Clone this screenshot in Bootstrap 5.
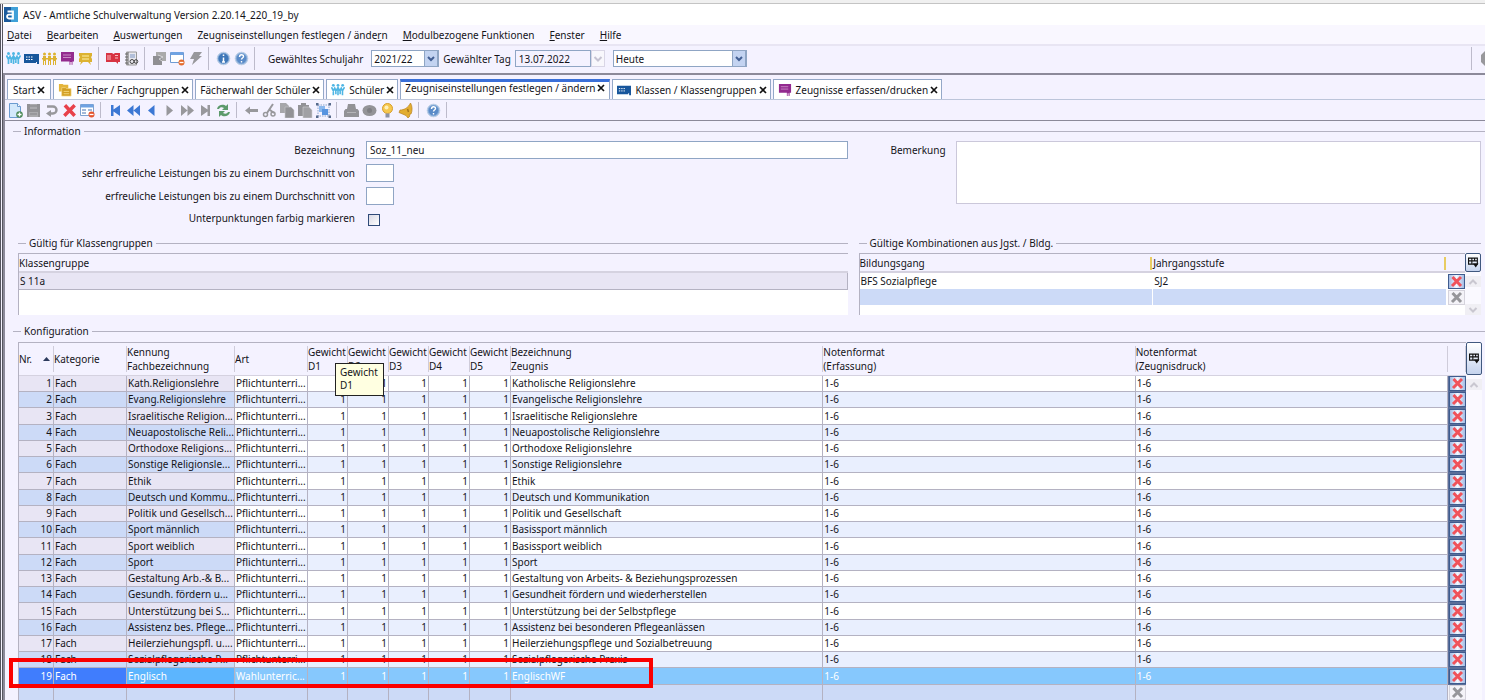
<!doctype html>
<html lang="de">
<head>
<meta charset="utf-8">
<meta name="viewport" content="width=device-width, initial-scale=1">
<title>ASV - Amtliche Schulverwaltung</title>
<link href="https://cdn.jsdelivr.net/npm/bootstrap@5.3.0/dist/css/bootstrap.min.css" rel="stylesheet">
<script src="https://cdn.jsdelivr.net/npm/bootstrap@5.3.0/dist/js/bootstrap.bundle.min.js" defer></script>
<style>
  :root { --face:#f4f2ff; --line:#b4b2c2; --frame:#8c8a9a; --field:#8fa5c4; }
  body { font:10px/14px "Noto Sans","Open Sans",sans-serif; color:#14141a; background:var(--face); height:100vh; overflow:hidden; }
  button, input, select, textarea { font:inherit; color:inherit; border-radius:0; }

  /* window frame, title, menu */
  .top-strip { height:4px; background:#f0f0f0; border-bottom:1px solid #c4c4c4; }
  .app-window { border-left:3px double #55555f; }
  .title-bar { height:21px; background:#fff; padding-left:1px; gap:5px; }
  .menu-bar { height:21px; background:#f9f7ff; border-bottom:2px solid #e8e5f3; padding-left:4px; gap:15px; }
  .menu-bar a { color:inherit; text-decoration:none; }

  /* tool bars */
  .tool-bar { height:27px; padding:0 0 2px 1px; }
  .tool-bar.inner { height:20px; padding-bottom:0; }
  .tool-btn { width:18px; height:18px; padding:0; border:0; background:none; display:flex; align-items:center; justify-content:center; }
  .tool-bar svg { width:15px; height:15px; display:block; }
  .c-sky { color:#4fb6e4; }
  .c-blue { color:#3c78d4; }
  .c-grey { color:#98989c; }
  .c-red { color:#e8404a; }
  .sep { width:10px; height:23px; background:linear-gradient(#bdbbcb,#bdbbcb) 4px 0/1px 100% no-repeat; }
  .inner .sep { height:16px; }
  .combo { height:17px; padding:0 16px 0 2px; line-height:14px; border:1px solid var(--field); appearance:none; color:#14141a;
    background:#fff url("data:image/svg+xml,%3Csvg xmlns='http://www.w3.org/2000/svg' width='14' height='17'%3E%3Crect width='14' height='17' fill='%23c3d3f1'/%3E%3Crect x='.5' y='.5' width='13' height='16' fill='none' stroke='%238fa5c4'/%3E%3Cpath d='M4 7l3 3 3-3' fill='none' stroke='%23435f94' stroke-width='2'/%3E%3C/svg%3E") right center no-repeat; }
  .combo-off { width:14px; height:17px; border:1px solid #d9d6e6; padding:0; background:#f8f7fc; color:#c6c3d2; display:flex; align-items:center; justify-content:center; }
  .tool-bar .combo-off svg { width:10px; height:10px; }
  .w-year { width:68px; }
  .w-range { width:134px; }
  .tool-bar .w-day { width:76px; background:var(--face); height:17px; }
  .bar-end { width:18px; }

  /* document tabs */
  .work-area { border-top:2px solid var(--frame); border-left:2px solid var(--frame); }
  .doc-tabs { padding:4px 0 0 2px; gap:2px; border-bottom:1px solid #bcc5da; height:25px; flex-wrap:nowrap; }
  .doc-tab { display:flex; align-items:center; height:20px; gap:2px; padding:0 3px 0 4px; background:#fff; border:1px solid #94a8c8; border-bottom:0; white-space:nowrap; }
  .doc-tab:first-child { padding:0 5px; }
  .doc-tab a { color:inherit; text-decoration:none; display:flex; align-items:center; gap:4px; }
  .doc-tab svg.pic { width:14px; height:14px; }
  .doc-tab.current { border-top:3px solid #3a6fd8; padding:0 4px; }
  .doc-tab.current, .doc-tab.current a { align-items:flex-start; line-height:13px; }
  .doc-tab.current button { margin-top:2px; }
  .doc-tab button { border:0; padding:0; background:none; width:8px; height:8px; display:flex; }
  .doc-tab button svg { width:8px; height:8px; }

  /* titled groups and form */
  .content-area { border-top:1px solid var(--frame); }
  fieldset > legend { font-size:10px; line-height:14px; display:flex; align-items:center; gap:3px; margin:0; float:none; }
  fieldset > legend::before { content:""; width:8px; height:1px; background:var(--line); }
  fieldset > legend::after { content:""; flex:1; height:1px; background:var(--line); }
  .split { display:grid; grid-template-columns:56.7% 1fr; }
  .info-set { margin-top:3px; padding-left:8px; }
  .info-grid { display:grid; grid-template-columns:342px 1fr; column-gap:11px; row-gap:5px; align-items:center; padding-top:3px; }
  .info-grid label { text-align:right; }
  .text-field { border:1px solid var(--field); height:18px; padding:0 3px; background:#fff; width:100%; }
  .text-field.short { width:28px; }
  .tick { appearance:none; width:12px; height:12px; border:1px solid #2f4a78; margin:4px 0 0 2px; background:linear-gradient(135deg,#d9d9e4,#fff); display:block; }
  .note-row { padding:3px 4px 0 0; gap:10px; }
  .note-row label { width:98px; text-align:right; padding-top:2px; }
  .notes { border:1px solid #cbc8da; background:#fff; height:63px; resize:none; display:block; }

  /* data grids */
  .groups { padding:10px 4px 0 13px; column-gap:11px; }
  .grid-row { margin-top:3px; }
  .grid-box { border-top:1px solid var(--line); border-left:1px solid var(--line); background:#fff; }
  .grid-box table { width:100%; table-layout:fixed; border-collapse:separate; border-spacing:0; }
  .grid-box th { font-weight:400; padding:0; background:var(--face); border-bottom:1px solid #d5d2e0; line-height:14px; vertical-align:middle; white-space:nowrap; }
  .grid-box td { padding:0 1px; line-height:15px; white-space:nowrap; overflow:hidden; }
  .small-grid { height:62px; overflow:hidden; }
  .small-grid th { height:19px; border-bottom-width:2px; }
  .small-grid td { height:16px; }
  .small-grid .picked td { height:17px; background:#e8e5f4; border-bottom:1px solid var(--line); border-right:1px solid var(--line); }
  .small-grid .new-row td { background:#ccdaf7; border-right:1px solid #fff; }
  .small-grid tr > td.act { background:#fff; border:0; padding:0; }
  .small-grid th.mark-right { background:linear-gradient(#e8cc62,#e8cc62) right 1px top 3px/2px 13px no-repeat, var(--face); }
  .col-act { width:18px; }
  .scroll-col { width:18px; background:#faf9ff; }
  .col-pick { width:16px; border:1px solid #40587f; border-radius:2px; padding:0; background:linear-gradient(#fff,#c5d3ee); display:flex; align-items:center; justify-content:center; color:#111; }
  .col-pick svg { width:11px; height:11px; }
  .pick-small { height:19px; }
  .pick-tall { height:33px; }
  .arrow-btn { width:16px; height:11px; border:0; padding:0; background:#f0eff4; color:#c9c7d0; display:flex; align-items:center; justify-content:center; }
  .arrow-btn svg { width:10px; height:10px; }
  .del { width:17px; height:15px; padding:0; border:1px solid #3f5c8f; background:linear-gradient(90deg,#a4bce4,#f4f7ff 50%,#a4bce4); color:#f0525a; display:flex; align-items:center; justify-content:center; margin:0 auto; }
  .del svg { width:13px; height:13px; }
  .del.off { background:#f4f3f8; border-color:#d5d3dc; color:#96969a; }

  .config-set { margin-top:9px; padding-left:8px; }
  .config-body { padding:13px 3px 0 5px; margin-top:-9px; }
  .config-set .config-body { margin-top:0; padding-top:4px; }
  .big-grid th { height:33px; background:linear-gradient(#cfccda,#cfccda) right 0 top 3px/1px 26px no-repeat, var(--face); }
  .big-grid td { height:16px; border-right:1px solid var(--line); border-bottom:1px solid var(--line); background:#fff; }
  .big-grid tr:nth-child(4n+3) td { height:17px; }
  .big-grid tr:nth-child(even) td { background:#e9effe; }
  .big-grid td:nth-child(-n+3) { background:#e8e5f4; }
  .big-grid tr:nth-child(even) td:nth-child(-n+3), .big-grid tr.new-row td { background:#ccdaf7; }
  .big-grid tr td.act { padding:0; background:#5b6f9a; border-color:#5b6f9a; border-width:0 0 1px 0; }
  .big-grid tr:nth-child(even) td.act { background:#5b6f9a; }
  .big-grid tr.new-row td.act { background:#f4f3f8; border-color:#d5d3dc; }
  .big-grid tr.chosen td { background:#86c8fd; color:#fff; }
  .big-grid tr.chosen td:nth-child(-n+2) { background:#407dfd; }
  .big-grid tr.chosen td:nth-child(3) { background:#5cb5fe; }
  .big-grid tr.chosen td.act { background:#5b6f9a; }
  .big-grid .num { text-align:right; }
  .c-nr { width:35px; } .c-kat { width:73px; } .c-fach { width:108px; } .c-w { width:40px; } .c-w2 { width:41px; }

  /* overlays on the configuration grid */
  .red-frame { position:absolute; left:-4px; right:832px; top:320px; height:30px; border:4px solid #fb0000; pointer-events:none; }
  .tip { position:absolute; left:322px; top:25px; width:49px; padding:2px 4px 3px; line-height:13px; background:#ffffe1; border:1px solid #222; }
</style>
</head>
<body>
<svg class="d-none" xmlns="http://www.w3.org/2000/svg">
  <symbol id="people" viewBox="0 0 15 15"><g fill="currentColor"><circle cx="2.500" cy="2.500" r="1.500"/><circle cx="7.500" cy="2.500" r="1.500"/><circle cx="12.500" cy="2.500" r="1.500"/></g><path d="M.5 4.500l2 4 1.500-3 1.300 3L7.500 5l2 3.500 1.500-3 1.200 3 2.300-4M2.500 8v5M5.200 8v4M7.500 6v7M9.800 8v4M12.300 8v5" fill="none" stroke="currentColor" stroke-width="1.700"/></symbol>
  <symbol id="board" viewBox="0 0 15 15"><path d="M0 3h15v10h-2v-2h-1v1H0z" fill="#17569c"/><path d="M2 6h7M2 8.500h7" stroke="#fff" stroke-dasharray="1.500 1"/></symbol>
  <symbol id="group" viewBox="0 0 15 15"><g fill="#dcb231"><circle cx="2.500" cy="3" r="1.500"/><circle cx="7.500" cy="3" r="1.500"/><circle cx="12.500" cy="3" r="1.500"/><path d="M1 5h3v9H3v-4H2v4H1zM6 5h3v9H8v-4H7v4H6zM11 5h3v9h-1v-4h-1v4h-1z"/><path d="M0 7h15v1.500H0z"/></g></symbol>
  <symbol id="certificate" viewBox="0 0 15 15"><path d="M1 1h13v9.500h-1.500V14l-1.500-1-1.500 1v-3.500H1z" fill="#932a8f"/><path d="M3 4h8M3 6.500h8" stroke="#c98cc6"/><path d="M10 11h2v2h-2z" fill="#d5a3d3"/></symbol>
  <symbol id="ticket" viewBox="0 0 15 15"><path d="M1 2h13v3l-1 1 1 2v3h-2l1 3-3-3H5l-3 3 1-3H1V8l1-2-1-1z" fill="#dcb231"/><path d="M4 5h7M4 8h7" stroke="#fff0a8"/></symbol>
  <symbol id="redbook" viewBox="0 0 15 15"><path d="M0 2h6l1.500 1L9 2h5v9h-2v2l-2-2H0z" fill="#d73343"/><path d="M2 4v5M4 4v5M9 4.500h3M9 7h3" stroke="#f9bbc0"/></symbol>
  <symbol id="notebook" viewBox="0 0 15 15"><path d="M2.500 1h10v13h-10z" fill="#e8e8ee" stroke="#999"/><path d="M4 1v13M1 3h3M1 6h3M1 9h3M1 12h3" stroke="#666"/><path d="M6 4h5M6 6h5" stroke="#7d96c4"/><circle cx="8" cy="10.500" r="2" fill="none" stroke="#444"/><circle cx="12" cy="10.500" r="1.800" fill="none" stroke="#444"/></symbol>
  <symbol id="copygrey" viewBox="0 0 15 15"><path d="M4 1h10v9H4z" fill="#aaa"/><path d="M1 5h9v9H1z" fill="#8f8f93"/><path d="M6 4l5 2-4 2 3 2" stroke="#d5d5d8" fill="none"/></symbol>
  <symbol id="window" viewBox="0 0 15 15"><path d="M.5 1.500h13v10H.5z" fill="#fff" stroke="#6f9bd3"/><path d="M1 1h12v3H1z" fill="#6fa2e2"/><circle cx="11.500" cy="11.500" r="3" fill="#e46a2c"/><path d="M9.500 11.500h4" stroke="#fff" stroke-width="1.300"/></symbol>
  <symbol id="form" viewBox="0 0 15 15"><path d="M.5 1.500h13v11H.5z" fill="#fff" stroke="#7ea2d1"/><path d="M1 1.500h12v3H1z" fill="#6fa2e2"/><path d="M2 7h4M8 7h4M2 10h4" stroke="#84a1cc" stroke-width="1.500"/><circle cx="11.500" cy="11.500" r="3" fill="#e4532c"/><path d="M9.500 11.500h4" stroke="#fff" stroke-width="1.300"/></symbol>
  <symbol id="bolt" viewBox="0 0 15 15"><path d="M6 1h8l-3 4h3L4 14l2-6H2z" fill="#98989c"/></symbol>
  <symbol id="info" viewBox="0 0 15 15"><circle cx="7.500" cy="7.500" r="6.300" fill="#86abd9" stroke="#bccfe6"/><circle cx="7.500" cy="7.500" r="5" fill="#3f77b8"/><path d="M7.500 3.500v1.500M7.500 6.500V11M6 11h3" stroke="#fff" stroke-width="1.500"/></symbol>
  <symbol id="help" viewBox="0 0 15 15"><circle cx="7.500" cy="7.500" r="6.300" fill="#86abd9" stroke="#bccfe6"/><circle cx="7.500" cy="7.500" r="4.800" fill="#5a8bc8"/><path d="M5.500 6c0-3 4-3 4-.5 0 1.500-2 1.500-2 3M7.500 10v1.500" fill="none" stroke="#fff" stroke-width="1.400"/></symbol>
  <symbol id="folders" viewBox="0 0 15 15"><path d="M1 1h4l1 1h5v7H1z" fill="#e4b53a"/><path d="M4 5h4l1 1h5v8H4z" fill="#d29e22" stroke="#f6dc8c" stroke-width=".7"/><path d="M6 9h6M6 11.500h6" stroke="#f3d67d"/></symbol>
  <symbol id="cross" viewBox="0 0 13 13"><path d="M2.500 2l8.500 9M11 2l-9 9" stroke="currentColor" stroke-width="3" fill="none"/></symbol>
  <symbol id="close" viewBox="0 0 8 8"><path d="M1 1l6 6M7 1L1 7" stroke="#111" stroke-width="1.700"/></symbol>
  <symbol id="newdoc" viewBox="0 0 15 15"><path d="M1.500.5h8l3 3v11h-11z" fill="#d3e8fb" stroke="#6b9bd0"/><path d="M9.500.5v3h3" fill="#fff" stroke="#6b9bd0"/><circle cx="11.500" cy="11.500" r="3.300" fill="#4c8a58"/><path d="M11.500 9.500v4M9.500 11.500h4" stroke="#fff" stroke-width="1.300"/></symbol>
  <symbol id="disk" viewBox="0 0 15 15"><path d="M1 1h13v13H1z" fill="#929296"/><path d="M4 1h7v5H4zM3 9h9v5H3z" fill="#aaaaae"/><path d="M4 3h7M4 11h7" stroke="#858589"/></symbol>
  <symbol id="undo" viewBox="0 0 15 15"><path d="M3 3.500h6a3.500 3.500 0 010 7H6" fill="none" stroke="#98989c" stroke-width="2.400"/><path d="M7 7v7l-5-3.500z" fill="#98989c"/></symbol>
  <symbol id="first" viewBox="0 0 15 15"><path d="M3 2h2.500v4.500L12 2v11L5.500 8.500V13H3z" fill="currentColor"/></symbol>
  <symbol id="fast" viewBox="0 0 15 15"><path d="M7.500 2v11L1 7.500zM14 2v11L7.500 7.500z" fill="currentColor"/></symbol>
  <symbol id="step" viewBox="0 0 15 15"><path d="M10.500 2v11L4 7.500z" fill="currentColor"/></symbol>
  <symbol id="refresh" viewBox="0 0 15 15"><path d="M1 6c1-5 7-5 9-3l2-2v6H6l2-2C6 4 4 4 3 6zM14 9c-1 5-7 5-9 3l-2 2V8h6l-2 2c2 1 4 1 5-1z" fill="#5c9a6c"/></symbol>
  <symbol id="back" viewBox="0 0 15 15"><path d="M1 7.500L6 3.500V6h8v3H6v2.500z" fill="#98989c"/></symbol>
  <symbol id="scissors" viewBox="0 0 15 15"><path d="M11 1L5 10M8 7l4 3" stroke="#98989c" stroke-width="2"/><circle cx="3.500" cy="11.500" r="2" fill="none" stroke="#98989c" stroke-width="1.500"/><circle cx="11" cy="11" r="2" fill="none" stroke="#98989c" stroke-width="1.500"/></symbol>
  <symbol id="copy" viewBox="0 0 15 15"><path d="M0 0h6l3 3v7H0z" fill="#a6a6aa"/><path d="M5 4h6l3 3v8H5z" fill="#929296" stroke="#c9c9cf" stroke-width=".6"/></symbol>
  <symbol id="paste" viewBox="0 0 15 15"><path d="M0 2h3V0h5v2h3v11H0z" fill="#929296"/><path d="M5 4h6l3 3v8H5z" fill="#a0a0a4" stroke="#d0d0d5" stroke-width=".6"/></symbol>
  <symbol id="select" viewBox="0 0 15 15"><path d="M2 2h11v11H2z" fill="none" stroke="#8ba4cc" stroke-dasharray="1.500 1"/><path d="M3 3h6v6H3z" fill="#8ab8ee"/><path d="M6 6h6v6H6z" fill="#5794e0"/><path d="M0 0h2.500v2.500H0zM12.500 0H15v2.500h-2.500zM0 12.500h2.500V15H0zM12.500 12.500H15V15h-2.500z" fill="#566a8c"/></symbol>
  <symbol id="printer" viewBox="0 0 15 15"><path d="M4 1h7l1 5h1.500L15 8v6H0V8l1.500-2H3z" fill="#929296"/><path d="M3 9.500h9" stroke="#b5b5b8"/></symbol>
  <symbol id="eye" viewBox="0 0 15 15"><ellipse cx="7.500" cy="7.500" rx="7" ry="5.500" fill="#949498"/><circle cx="7.500" cy="7.500" r="2.500" fill="#7f7f83"/></symbol>
  <symbol id="bulb" viewBox="0 0 15 15"><circle cx="7.500" cy="5.500" r="5" fill="#f6c84f" stroke="#d79e2c"/><circle cx="6.500" cy="4.500" r="2" fill="#fff0b8"/><path d="M5.500 10.500h4v4h-4z" fill="#8c93a4"/></symbol>
  <symbol id="horn" viewBox="0 0 15 15"><path d="M12.500 0c2 3 2 8 .5 11l-2 .5 1 1.500-2 2-2-2.500L1 9.500 2 7c4 0 8-2 10.500-7z" fill="#e2ad31" stroke="#b98320" stroke-width=".7"/><path d="M9.500 6l1 3" stroke="#a4741c" stroke-width="1.500"/></symbol>
  <symbol id="columns" viewBox="0 0 10 10"><path d="M.5 1h8v5.500h-8zM.5 3.500h8M3.500 1v5.500M6 1v3" fill="none" stroke="currentColor"/><path d="M4.500 6h5L7 9.500z" fill="currentColor"/></symbol>
  <symbol id="chev-up" viewBox="0 0 10 10"><path d="M1.500 7L5 3.500 8.500 7" fill="none" stroke="currentColor" stroke-width="2"/></symbol>
  <symbol id="chev-down" viewBox="0 0 10 10"><path d="M1.500 3L5 6.500 8.500 3" fill="none" stroke="currentColor" stroke-width="2"/></symbol>
</svg>

<div class="top-strip"></div>
<div class="app-window">
  <header class="title-bar d-flex align-items-center">
    <svg width="14" height="15" viewBox="0 0 14 15" aria-hidden="true"><path d="M0 0h14v15H0z" fill="#1c5a9c"/><path d="M7 0h7v15H7z" fill="#3fa0d8"/><path d="M3.500 4.500h5.500v7H5a1.800 1.800 0 010-3.800h4" fill="none" stroke="#fff" stroke-width="1.800"/></svg>
    <span>ASV - Amtliche Schulverwaltung Version 2.20.14_220_19_by</span>
  </header>
  <nav class="menu-bar d-flex align-items-center" aria-label="Hauptmenü">
    <a href="#"><u>D</u>atei</a><a href="#"><u>B</u>earbeiten</a><a href="#"><u>A</u>uswertungen</a><a href="#">Zeugniseinstellungen festlegen / ände<u>r</u>n</a><a href="#"><u>M</u>odulbezogene Funktionen</a><a href="#"><u>F</u>enster</a><a href="#"><u>H</u>ilfe</a>
  </nav>
  <div class="tool-bar d-flex align-items-center" role="toolbar">
    <button class="tool-btn c-sky" aria-label="Schüler"><svg><use href="#people"/></svg></button>
    <button class="tool-btn" aria-label="Klassen"><svg><use href="#board"/></svg></button>
    <button class="tool-btn" aria-label="Gruppen"><svg><use href="#group"/></svg></button>
    <button class="tool-btn" aria-label="Zeugnisse"><svg><use href="#certificate"/></svg></button>
    <button class="tool-btn" aria-label="Karten"><svg><use href="#ticket"/></svg></button>
    <i class="sep"></i>
    <button class="tool-btn" aria-label="Buch"><svg><use href="#redbook"/></svg></button>
    <button class="tool-btn" aria-label="Suche"><svg><use href="#notebook"/></svg></button>
    <i class="sep"></i>
    <button class="tool-btn" aria-label="Module"><svg><use href="#copygrey"/></svg></button>
    <button class="tool-btn" aria-label="Fenster schließen"><svg><use href="#window"/></svg></button>
    <button class="tool-btn" aria-label="Aktion"><svg><use href="#bolt"/></svg></button>
    <i class="sep"></i>
    <button class="tool-btn" aria-label="Info"><svg><use href="#info"/></svg></button>
    <button class="tool-btn" aria-label="Hilfe"><svg><use href="#help"/></svg></button>
    <i class="sep"></i>
    <label for="year" class="mx-2 text-nowrap">Gewähltes Schuljahr</label>
    <select id="year" class="combo w-year"><option>2021/22</option></select>
    <label for="day" class="mx-1 text-nowrap">Gewählter Tag</label>
    <input id="day" class="text-field w-day" value="13.07.2022">
    <button class="combo-off" aria-label="Datum wählen" disabled><svg><use href="#chev-down"/></svg></button>
    <select class="combo w-range ms-2" aria-label="Zeitraum"><option>Heute</option></select>
    <div class="ms-auto d-flex align-items-center overflow-hidden bar-end"><i class="sep flex-shrink-0"></i><svg class="flex-shrink-0 ms-1" viewBox="0 0 15 15"><path d="M4 0h7l4 4v7l-4 4H4l-4-4V4z" fill="#98989c"/></svg></div>
  </div>

  <main class="work-area">
    <ul class="doc-tabs nav" aria-label="Module">
      <li class="doc-tab"><a href="#">Start</a><button aria-label="Schließen"><svg><use href="#close"/></svg></button></li>
      <li class="doc-tab"><a href="#"><svg class="pic"><use href="#folders"/></svg>Fächer / Fachgruppen</a><button aria-label="Schließen"><svg><use href="#close"/></svg></button></li>
      <li class="doc-tab"><a href="#">Fächerwahl der Schüler</a><button aria-label="Schließen"><svg><use href="#close"/></svg></button></li>
      <li class="doc-tab"><a href="#"><svg class="pic c-sky"><use href="#people"/></svg>Schüler</a><button aria-label="Schließen"><svg><use href="#close"/></svg></button></li>
      <li class="doc-tab current"><a href="#" aria-current="page">Zeugniseinstellungen festlegen / ändern</a><button aria-label="Schließen"><svg><use href="#close"/></svg></button></li>
      <li class="doc-tab"><a href="#"><svg class="pic"><use href="#board"/></svg>Klassen / Klassengruppen</a><button aria-label="Schließen"><svg><use href="#close"/></svg></button></li>
      <li class="doc-tab"><a href="#"><svg class="pic"><use href="#certificate"/></svg>Zeugnisse erfassen/drucken</a><button aria-label="Schließen"><svg><use href="#close"/></svg></button></li>
    </ul>
    <div class="tool-bar inner d-flex align-items-center" role="toolbar">
      <button class="tool-btn" aria-label="Neu"><svg><use href="#newdoc"/></svg></button>
      <button class="tool-btn" aria-label="Speichern"><svg><use href="#disk"/></svg></button>
      <button class="tool-btn" aria-label="Rückgängig"><svg><use href="#undo"/></svg></button>
      <button class="tool-btn c-red" aria-label="Löschen"><svg><use href="#cross"/></svg></button>
      <button class="tool-btn" aria-label="Ansicht schließen"><svg><use href="#form"/></svg></button>
      <i class="sep"></i>
      <button class="tool-btn c-blue" aria-label="Erster"><svg><use href="#first"/></svg></button>
      <button class="tool-btn c-blue" aria-label="Schnell zurück"><svg><use href="#fast"/></svg></button>
      <button class="tool-btn c-blue" aria-label="Zurück"><svg><use href="#step"/></svg></button>
      <button class="tool-btn c-grey" aria-label="Weiter"><svg><use href="#step" transform="matrix(-1 0 0 1 15 0)"/></svg></button>
      <button class="tool-btn c-grey" aria-label="Schnell weiter"><svg><use href="#fast" transform="matrix(-1 0 0 1 15 0)"/></svg></button>
      <button class="tool-btn c-grey" aria-label="Letzter"><svg><use href="#first" transform="matrix(-1 0 0 1 15 0)"/></svg></button>
      <button class="tool-btn" aria-label="Aktualisieren"><svg><use href="#refresh"/></svg></button>
      <i class="sep"></i>
      <button class="tool-btn" aria-label="Zurückgehen"><svg><use href="#back"/></svg></button>
      <button class="tool-btn" aria-label="Ausschneiden"><svg><use href="#scissors"/></svg></button>
      <button class="tool-btn" aria-label="Kopieren"><svg><use href="#copy"/></svg></button>
      <button class="tool-btn" aria-label="Einfügen"><svg><use href="#paste"/></svg></button>
      <button class="tool-btn" aria-label="Auswählen"><svg><use href="#select"/></svg></button>
      <i class="sep"></i>
      <button class="tool-btn" aria-label="Drucken"><svg><use href="#printer"/></svg></button>
      <button class="tool-btn" aria-label="Vorschau"><svg><use href="#eye"/></svg></button>
      <button class="tool-btn" aria-label="Tipp"><svg><use href="#bulb"/></svg></button>
      <button class="tool-btn" aria-label="Meldungen"><svg><use href="#horn"/></svg></button>
      <i class="sep"></i>
      <button class="tool-btn" aria-label="Hilfe"><svg><use href="#help"/></svg></button>
      <i class="sep"></i>
    </div>

    <div class="content-area">
      <fieldset class="info-set">
        <legend>Information</legend>
        <div class="split">
          <div class="info-grid">
            <label for="f1">Bezeichnung</label><input id="f1" class="text-field" value="Soz_11_neu">
            <label for="f2">sehr erfreuliche Leistungen bis zu einem Durchschnitt von</label><input id="f2" class="text-field short">
            <label for="f3">erfreuliche Leistungen bis zu einem Durchschnitt von</label><input id="f3" class="text-field short">
            <label for="f4">Unterpunktungen farbig markieren</label><input id="f4" type="checkbox" class="tick">
          </div>
          <div class="d-flex note-row">
            <label for="f5">Bemerkung</label><textarea id="f5" class="notes flex-grow-1"></textarea>
          </div>
        </div>
      </fieldset>

      <div class="split groups">
        <fieldset>
          <legend>Gültig für Klassengruppen</legend>
          <div class="grid-row grid-box small-grid">
            <table><thead><tr><th>Klassengruppe</th></tr></thead><tbody><tr class="picked"><td>S 11a</td></tr></tbody></table>
          </div>
        </fieldset>
        <fieldset>
          <legend>Gültige Kombinationen aus Jgst. / Bldg.</legend>
          <div class="grid-row d-flex">
            <div class="grid-box small-grid flex-grow-1">
              <table>
                <colgroup><col><col><col class="col-act"></colgroup>
                <thead><tr><th class="mark-right">Bildungsgang</th><th class="mark-right">Jahrgangsstufe</th><th></th></tr></thead>
                <tbody>
                  <tr><td>BFS Sozialpflege</td><td>SJ2</td><td class="act"><button class="del" aria-label="Zeile löschen"><svg><use href="#cross"/></svg></button></td></tr>
                  <tr class="new-row"><td></td><td></td><td class="act"><button class="del off" aria-label="Zeile löschen"><svg><use href="#cross"/></svg></button></td></tr>
                </tbody>
              </table>
            </div>
            <div class="scroll-col d-flex flex-column">
              <button class="col-pick pick-small" aria-label="Spalten wählen"><svg><use href="#columns"/></svg></button>
              <button class="arrow-btn mt-1" aria-label="Nach oben"><svg><use href="#chev-up"/></svg></button>
              <button class="arrow-btn mt-auto" aria-label="Nach unten"><svg><use href="#chev-down"/></svg></button>
            </div>
          </div>
        </fieldset>
      </div>

      <fieldset class="config-set">
        <legend>Konfiguration</legend>
        <div class="d-flex position-relative config-body">
          <div class="grid-box big-grid flex-grow-1">
            <table>
              <colgroup><col class="c-nr"><col class="c-kat"><col class="c-fach"><col class="c-kat"><col class="c-w"><col class="c-w2"><col class="c-w"><col class="c-w2"><col class="c-w2"><col><col><col><col class="col-act"></colgroup>
              <thead><tr>
                <th><span class="d-flex align-items-center justify-content-between pe-1">Nr. <svg width="7" height="4" viewBox="0 0 7 4"><path d="M0 4l3.500-4L7 4z" fill="#2c3a5c"/></svg></span></th>
                <th>Kategorie</th><th>Kennung<br>Fachbezeichnung</th><th>Art</th>
                <th>Gewicht<br>D1</th><th>Gewicht<br>D2</th><th>Gewicht<br>D3</th><th>Gewicht<br>D4</th><th>Gewicht<br>D5</th>
                <th>Bezeichnung<br>Zeugnis</th><th>Notenformat<br>(Erfassung)</th><th>Notenformat<br>(Zeugnisdruck)</th><th></th>
              </tr></thead>
              <tbody id="subjects"></tbody>
            </table>
          </div>
          <div class="scroll-col d-flex flex-column">
            <button class="col-pick pick-tall" aria-label="Spalten wählen"><svg><use href="#columns"/></svg></button>
            <button class="arrow-btn mt-1" aria-label="Nach oben"><svg><use href="#chev-up"/></svg></button>
          </div>
          <div class="tip" role="tooltip">Gewicht<br>D1</div>
          <div class="red-frame"></div>
        </div>
      </fieldset>
    </div>
  </main>
</div>
<script>
  // [Fachbezeichnung, Unterrichtsart, Zeugnisbezeichnung]
  const P = 'Pflichtunterri...';
  const rows = [
    ['Kath.Religionslehre', P, 'Katholische Religionslehre'],
    ['Evang.Religionslehre', P, 'Evangelische Religionslehre'],
    ['Israelitische Religion...', P, 'Israelitische Religionslehre'],
    ['Neuapostolische Reli...', P, 'Neuapostolische Religionslehre'],
    ['Orthodoxe Religions...', P, 'Orthodoxe Religionslehre'],
    ['Sonstige Religionsle...', P, 'Sonstige Religionslehre'],
    ['Ethik', P, 'Ethik'],
    ['Deutsch und Kommu...', P, 'Deutsch und Kommunikation'],
    ['Politik und Gesellsch...', P, 'Politik und Gesellschaft'],
    ['Sport männlich', P, 'Basissport männlich'],
    ['Sport weiblich', P, 'Basissport weiblich'],
    ['Sport', P, 'Sport'],
    ['Gestaltung Arb.-& B...', P, 'Gestaltung von Arbeits- & Beziehungsprozessen'],
    ['Gesundh. fördern u...', P, 'Gesundheit fördern und wiederherstellen'],
    ['Unterstützung bei S...', P, 'Unterstützung bei der Selbstpflege'],
    ['Assistenz bes. Pflege...', P, 'Assistenz bei besonderen Pflegeanlässen'],
    ['Heilerziehungspfl. u....', P, 'Heilerziehungspflege und Sozialbetreuung'],
    ['Sozialpflegerische P...', P, 'Sozialpflegerische Praxis'],
    ['Englisch', 'Wahlunterric...', 'EnglischWF']
  ];
  const del = off => `<td class="act"><button class="del ${off ? 'off' : ''}" aria-label="Zeile löschen"><svg><use href="#cross"/></svg></button></td>`;
  document.getElementById('subjects').innerHTML = rows.map(([fach, art, zeugnis], i) =>
    `<tr class="${i === 18 ? 'chosen' : ''}"><td class="num">${i + 1}</td><td>Fach</td><td>${fach}</td><td>${art}</td>` +
    '<td class="num">1</td>'.repeat(5) +
    `<td>${zeugnis}</td><td>1-6</td><td>1-6</td>${del(false)}</tr>`).join('') +
    `<tr class="new-row">${'<td></td>'.repeat(12)}${del(true)}</tr>`;
</script>
</body>
</html>
